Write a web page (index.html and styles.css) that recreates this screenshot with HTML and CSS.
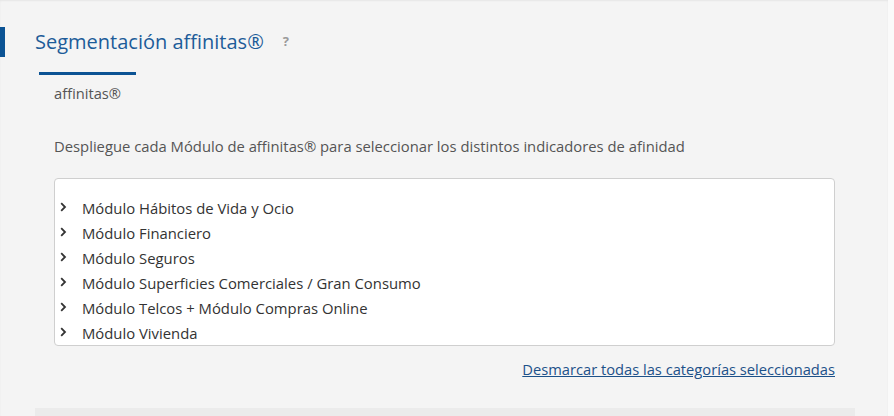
FILE: index.html
```html
<!DOCTYPE html>
<html lang="es">
<head>
<meta charset="UTF-8" />
<meta name="viewport" content="width=device-width, initial-scale=1" />
<title>Segmentación affinitas®</title>
<link rel="stylesheet" href="styles.css">
</head>
<body>

<div class="panel">
  <div class="panel-head">
    <h2 class="panel-title">Segmentación affinitas®</h2>
    <span class="help">?</span>
  </div>

  <div class="tabs">
    <div class="tab-bar"></div>
    <div class="tab-label">affinitas®</div>
  </div>

  <p class="intro">Despliegue cada Módulo de affinitas® para seleccionar los distintos indicadores de afinidad</p>

  <div class="tree">
    <ul>
      <li><svg class="chev" viewBox="0 0 7 10"><path d="M1.2 1.2l3.8 3.8L1.2 8.8" /></svg>Módulo Hábitos de Vida y Ocio</li>
      <li><svg class="chev" viewBox="0 0 7 10"><path d="M1.2 1.2l3.8 3.8L1.2 8.8" /></svg>Módulo Financiero</li>
      <li><svg class="chev" viewBox="0 0 7 10"><path d="M1.2 1.2l3.8 3.8L1.2 8.8" /></svg>Módulo Seguros</li>
      <li><svg class="chev" viewBox="0 0 7 10"><path d="M1.2 1.2l3.8 3.8L1.2 8.8" /></svg>Módulo Superficies Comerciales / Gran Consumo</li>
      <li><svg class="chev" viewBox="0 0 7 10"><path d="M1.2 1.2l3.8 3.8L1.2 8.8" /></svg>Módulo Telcos + Módulo Compras Online</li>
      <li><svg class="chev" viewBox="0 0 7 10"><path d="M1.2 1.2l3.8 3.8L1.2 8.8" /></svg>Módulo Vivienda</li>
    </ul>
  </div>

  <div class="actions">
    <a href="#" class="clear-link">Desmarcar todas las categorías seleccionadas</a>
  </div>

  <div class="panel-foot"></div>
</div>

</body>
</html>
```

FILE: styles.css
```css
html, body {
  margin: 0;
  padding: 0;
}
body {
  background: #fafafa;
  font-family: 'Open Sans', 'Liberation Sans', sans-serif;
  width: 894px;
  height: 416px;
  overflow: hidden;
}
.panel {
  width: 888px;
  height: 416px;
  background: #f4f4f4;
  box-shadow: 0 1px 2px rgba(0,0,0,0.06) inset;
  display: flex;
  flex-direction: column;
}
.panel-head {
  display: flex;
  align-items: center;
  margin-top: 27px;
  height: 30px;
  border-left: 5px solid #0b5394;
}
.panel-title {
  margin: 0 0 0 30px;
  font-size: 20px;
  font-weight: normal;
  color: #1d5c99;
  line-height: 30px;
}
.help {
  margin-left: 19px;
  font-size: 13px;
  font-weight: bold;
  color: #9a9a9a;
  position: relative;
  top: -1px;
}
.tabs {
  margin-top: 15px;
  padding-left: 39px;
}
.tab-bar {
  width: 97px;
  height: 3px;
  background: #0b5394;
}
.tab-label {
  margin: 8px 0 0 15px;
  font-size: 14.7px;
  color: #555;
  line-height: 20px;
}
.intro {
  margin: 33px 0 0 54px;
  font-size: 14.8px;
  color: #555;
  line-height: 20px;
}
.tree {
  margin: 22px 0 0 54px;
  width: 779px;
  height: 166px;
  background: #fff;
  border: 1px solid #cfcfcf;
  border-radius: 4px;
}
.tree ul {
  list-style: none;
  margin: 0;
  padding: 16px 0 0 5px;
}
.tree li {
  display: flex;
  align-items: center;
  height: 25px;
  font-size: 14.85px;
  color: #333;
}
.chev {
  flex: none;
  width: 7px;
  height: 10px;
  margin: -2px 15px 0 0;
  fill: none;
  stroke: #333;
  stroke-width: 1.8;
}
.actions {
  margin-top: 13px;
  width: 835px;
  display: flex;
  justify-content: flex-end;
}
.clear-link {
  font-size: 14.7px;
  color: #1d5189;
  line-height: 20px;
}
.panel-foot {
  margin: auto 0 0 35px;
  width: 820px;
  height: 8px;
  background: #ebebeb;
}
```
